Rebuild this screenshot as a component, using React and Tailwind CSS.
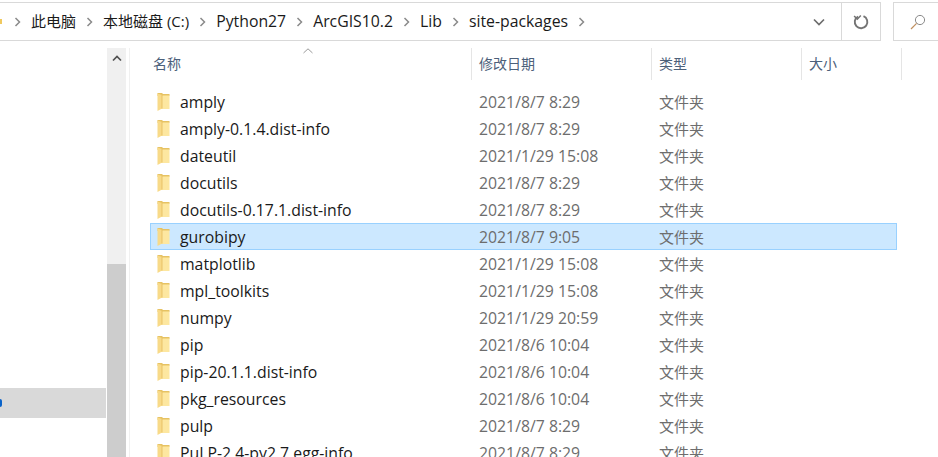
import * as React from 'react';

const files = [
  ['amply', '2021/8/7 8:29'],
  ['amply-0.1.4.dist-info', '2021/8/7 8:29'],
  ['dateutil', '2021/1/29 15:08'],
  ['docutils', '2021/8/7 8:29'],
  ['docutils-0.17.1.dist-info', '2021/8/7 8:29'],
  ['gurobipy', '2021/8/7 9:05', true],
  ['matplotlib', '2021/1/29 15:08'],
  ['mpl_toolkits', '2021/1/29 15:08'],
  ['numpy', '2021/1/29 20:59'],
  ['pip', '2021/8/6 10:04'],
  ['pip-20.1.1.dist-info', '2021/8/6 10:04'],
  ['pkg_resources', '2021/8/6 10:04'],
  ['pulp', '2021/8/7 8:29'],
  ['PuLP-2.4-py2.7.egg-info', '2021/8/7 8:29'],
];

function Chevron() {
  return (
    <svg width="7" height="10" viewBox="0 0 7 10" className="shrink-0">
      <path d="M1.5 1 L5.5 5 L1.5 9" fill="none" stroke="#8a8a8a" strokeWidth="1.5" />
    </svg>
  );
}

function Folder() {
  return (
    <svg width="13" height="19" viewBox="0 0 13 19" className="shrink-0">
      <path d="M0.5 0 H5 L6 1 H12.5 V3 H0.5 Z" fill="#e6c263" />
      <path d="M4 2.5 H12.5 V16 H3 Z" fill="#fde7a0" />
      <path d="M0.5 0.5 L5 2 V15.5 L0.5 18 Z" fill="#f8da88" />
      <path d="M5 2 V15.5" stroke="#e3bb5c" strokeWidth="0.8" />
    </svg>
  );
}

function HeaderCell({ width, label }) {
  return (
    <div className="flex h-8 shrink-0 items-center border-r border-[#e5e5e5] pb-[2px] pl-[7px]" style={{ width }}>
      <span className="text-[14px] text-[#4c607a]">{label}</span>
    </div>
  );
}

export default function App() {
  return (
    <div className="flex h-[457px] w-[938px] flex-col overflow-hidden bg-white font-['Open_Sans','Noto_Sans_CJK_SC',sans-serif] text-[15.8px]">
      {/* address bar */}
      <div className="mt-[2px] flex h-[39px] shrink-0 gap-[12px]">
        <div className="flex w-[881px] shrink-0 items-center border-y border-r border-[#d9d9d9]">
          <div className="h-[5px] w-[2px] shrink-0 self-center bg-[#f0c95e]" />
          <div className="ml-[12px] flex flex-1 items-center gap-[10px] text-[#1a1a1a]">
            <Chevron />
            <span className="whitespace-nowrap text-[15px]">此电脑</span>
            <Chevron />
            <span className="whitespace-nowrap text-[15px]">本地磁盘 (C:)</span>
            <Chevron />
            <span className="whitespace-nowrap">Python27</span>
            <Chevron />
            <span className="whitespace-nowrap">ArcGIS10.2</span>
            <Chevron />
            <span className="whitespace-nowrap">Lib</span>
            <Chevron />
            <span className="whitespace-nowrap">site-packages</span>
            <Chevron />
          </div>
          <svg width="12" height="8" viewBox="0 0 12 8" className="mr-[16px]">
            <path d="M1 1.5 L6 6.5 L11 1.5" fill="none" stroke="#6d6d6d" strokeWidth="1.7" />
          </svg>
          <div className="flex h-full w-[39px] items-center justify-center border-l border-[#d9d9d9]">
            <svg width="16" height="16" viewBox="0 0 16 16">
              <path d="M10.5 2.2 A6.3 6.3 0 1 1 5 2.5" fill="none" stroke="#747474" strokeWidth="1.9" />
              <path d="M6 0 V5 H1.5" fill="none" stroke="#747474" strokeWidth="1.5" transform="rotate(45 5 3)" />
            </svg>
          </div>
        </div>
        <div className="flex flex-1 items-center border-y border-l border-[#d9d9d9] pl-[16px]">
          <svg width="16" height="16" viewBox="0 0 16 16">
            <circle cx="10" cy="6" r="4.6" fill="none" stroke="#8a8a8a" strokeWidth="1" />
            <path d="M6.6 9.4 L1 15" stroke="#c09060" strokeWidth="1.2" />
          </svg>
        </div>
      </div>

      <div className="mt-[7px] flex min-h-0 flex-1">
        {/* nav pane */}
        <div className="flex w-[107px] shrink-0 flex-col">
          <div className="mt-[340px] flex h-[30px] w-[106px] items-center bg-[#d9d9d9]">
            <div className="h-[8px] w-[2px] rounded-r-full bg-[#0a63c9]" />
          </div>
        </div>
        {/* scrollbar */}
        <div className="flex w-[19px] shrink-0 flex-col bg-[#f0f0f0]">
          <div className="flex h-[20px] shrink-0 items-center justify-center">
            <svg width="10" height="7" viewBox="0 0 10 7">
              <path d="M1 5.5 L5 1.5 L9 5.5" fill="none" stroke="#505050" strokeWidth="1.7" />
            </svg>
          </div>
          <div className="mt-[196px] flex-1 bg-[#cdcdcd]" />
        </div>
        {/* file list */}
        <div className="relative ml-[3px] min-w-0 flex-1 border-l border-[#f0f0f0]">
          <svg width="10" height="6" viewBox="0 0 10 6" className="absolute left-[173px] top-0">
            <path d="M0.5 5 L5 0.8 L9.5 5" fill="none" stroke="#9a9a9a" strokeWidth="1" />
          </svg>
          <div className="flex pl-[16px]">
            <HeaderCell width={326} label="名称" />
            <HeaderCell width={180} label="修改日期" />
            <HeaderCell width={150} label="类型" />
            <HeaderCell width={100} label="大小" />
          </div>
          <div className="mt-[8px] flex flex-col pl-[20px]">
            {files.map(([name, date, selected]) => (
              <div
                key={name}
                className={
                  selected
                    ? 'flex h-[27px] w-[747px] shrink-0 items-center border border-[#99d1ff] bg-[#cce8ff] pl-[6px] pt-[2px]'
                    : 'flex h-[27px] w-[747px] shrink-0 items-center border border-transparent pl-[6px] pt-[2px]'
                }
              >
                <Folder />
                <span className="ml-[10px] w-[299px] whitespace-nowrap text-[#1a1a1a]">{name}</span>
                <span className="w-[180px] text-[#6d6d6d]">{date}</span>
                <span className="text-[15px] text-[#6d6d6d]">文件夹</span>
              </div>
            ))}
          </div>
        </div>
      </div>
    </div>
  );
}
